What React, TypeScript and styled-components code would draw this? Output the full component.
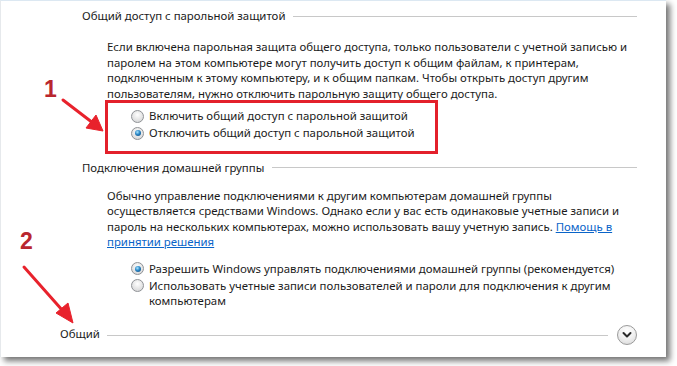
import React from "react";
import styled, { createGlobalStyle, css } from "styled-components";

const Global = createGlobalStyle`
  html, body { margin: 0; padding: 0; background: #ffffff; }
  body { font-family: "Noto Sans", "Open Sans", sans-serif; }
`;

const Frame = styled.div`
  position: relative;
  width: 677px;
  height: 366px;
  overflow: hidden;
  background: #ffffff;
`;

const Panel = styled.div`
  box-sizing: border-box;
  width: 666px;
  height: 357px;
  background: #ffffff;
  border-top: 1px solid #dce8f2;
  border-left: 1px solid #e6e9ec;
  box-shadow: 4px 4px 6px rgba(0, 0, 0, 0.55);
  padding-top: 7px;
  display: flex;
  flex-direction: column;
  font-size: 11.4px;
  color: #1b1b1b;
`;

const HeadingRow = styled.div<{ $indent: number; $top?: number }>`
  display: flex;
  align-items: center;
  gap: 8px;
  height: 16px;
  line-height: 16px;
  padding-left: ${(p) => p.$indent}px;
  padding-right: 29px;
  margin-top: ${(p) => p.$top ?? 0}px;
  white-space: nowrap;
`;

const Rule = styled.div`
  flex: 1;
  height: 1px;
  background: #c8c8c8;
`;

const Paragraph = styled.p<{ $top: number }>`
  margin: ${(p) => p.$top}px 0 0 106px;
  line-height: 15.5px;
  white-space: nowrap;
`;

const Link = styled.a`
  color: #0a64c8;
  text-decoration: underline;
  cursor: pointer;
`;

const RadioList = styled.div<{ $top: number }>`
  margin: ${(p) => p.$top}px 0 0 130px;
  display: flex;
  flex-direction: column;
  gap: 1.5px;
`;

const RadioRow = styled.label`
  display: flex;
  align-items: flex-start;
  gap: 5px;
  line-height: 15.5px;
  white-space: nowrap;
`;

const RadioDot = styled.span<{ $checked?: boolean }>`
  flex: none;
  box-sizing: border-box;
  width: 13px;
  height: 13px;
  margin-top: 1.5px;
  border-radius: 50%;
  border: 1px solid #8f9296;
  background: radial-gradient(circle at 50% 35%, #ffffff 0%, #e9e9e9 45%, #cfd0d2 100%);
  display: flex;
  align-items: center;
  justify-content: center;
  ${(p) =>
    p.$checked &&
    css`
      &::after {
        content: "";
        width: 6px;
        height: 6px;
        border-radius: 50%;
        background: radial-gradient(circle at 40% 35%, #a9e6ff 0%, #2a86c6 45%, #0b3f6f 100%);
      }
    `}
`;

const Footer = styled.div`
  margin-top: auto;
  margin-bottom: 12px;
  display: flex;
  align-items: center;
  gap: 7px;
  padding-left: 59px;
  padding-right: 29px;
  height: 20px;
`;

const FooterLabel = styled.span`
  position: relative;
  top: -2px;
`;

const ExpandButton = styled.button`
  flex: none;
  box-sizing: border-box;
  width: 20px;
  height: 20px;
  padding: 0;
  border-radius: 50%;
  border: 1px solid #9b9b9b;
  background: radial-gradient(circle at 50% 30%, #ffffff 0%, #f0f0f0 50%, #d4d4d4 100%);
  display: flex;
  align-items: center;
  justify-content: center;
  margin-left: 2px;
`;

const Overlay = styled.svg`
  position: absolute;
  left: 0;
  top: 0;
  pointer-events: none;
`;

const Callout = styled.div`
  position: absolute;
  box-sizing: border-box;
  left: 105px;
  top: 100px;
  width: 333px;
  height: 54px;
  border: 3px solid #e3202b;
  pointer-events: none;
`;

const Marker = styled.span<{ $x: number; $y: number }>`
  position: absolute;
  left: ${(p) => p.$x}px;
  top: ${(p) => p.$y}px;
  font-family: "Liberation Sans", Arial, sans-serif;
  font-weight: 700;
  font-size: 23px;
  line-height: 1;
  color: #b9262e;
`;

function Radio({ checked, children }: { checked?: boolean; children: React.ReactNode }) {
  return (
    <RadioRow>
      <RadioDot $checked={checked} />
      <span>{children}</span>
    </RadioRow>
  );
}

export default function App() {
  return (
    <Frame>
      <Global />
      <Panel>
        <HeadingRow $indent={81}>
          <span>Общий доступ с парольной защитой</span>
          <Rule />
        </HeadingRow>
        <Paragraph $top={15}>
          Если включена парольная защита общего доступа, только пользователи с учетной записью и
          <br />
          паролем на этом компьютере могут получить доступ к общим файлам, к принтерам,
          <br />
          подключенным к этому компьютеру, и к общим папкам. Чтобы открыть доступ другим
          <br />
          пользователям, нужно отключить парольную защиту общего доступа.
        </Paragraph>
        <RadioList $top={7}>
          <Radio>Включить общий доступ с парольной защитой</Radio>
          <Radio checked>Отключить общий доступ с парольной защитой</Radio>
        </RadioList>
        <HeadingRow $indent={81} $top={19}>
          <span>Подключения домашней группы</span>
          <Rule />
        </HeadingRow>
        <Paragraph $top={12}>
          Обычно управление подключениями к другим компьютерам домашней группы
          <br />
          осуществляется средствами Windows. Однако если у вас есть одинаковые учетные записи и
          <br />
          пароль на нескольких компьютерах, можно использовать вашу учетную запись.{" "}
          <Link>
            Помощь в
            <br />
            принятии решения
          </Link>
        </Paragraph>
        <RadioList $top={11}>
          <Radio checked>Разрешить Windows управлять подключениями домашней группы (рекомендуется)</Radio>
          <Radio>
            Использовать учетные записи пользователей и пароли для подключения к другим
            <br />
            компьютерам
          </Radio>
        </RadioList>
        <Footer>
          <FooterLabel>Общий</FooterLabel>
          <Rule />
          <ExpandButton aria-label="Развернуть">
            <svg width="10" height="8" viewBox="0 0 10 8">
              <path d="M1.5 2 L5 5.5 L8.5 2" fill="none" stroke="#2b2b2b" strokeWidth="2" strokeLinecap="round" strokeLinejoin="round" />
            </svg>
          </ExpandButton>
        </Footer>
      </Panel>

      <Callout />
      <Marker $x={44} $y={78}>1</Marker>
      <Marker $x={20} $y={230}>2</Marker>
      <Overlay width="677" height="366" viewBox="0 0 677 366">
        <g fill="#e8222c" stroke="#e8222c">
          <line x1="63" y1="100" x2="93" y2="123" strokeWidth="3" strokeLinecap="round" />
          <polygon points="103,131 86,128 96,115" strokeWidth="1" strokeLinejoin="round" />
          <line x1="24" y1="267" x2="63" y2="311" strokeWidth="3" strokeLinecap="round" />
          <polygon points="73,323 56,313 68,303" strokeWidth="1" strokeLinejoin="round" />
        </g>
      </Overlay>
    </Frame>
  );
}
